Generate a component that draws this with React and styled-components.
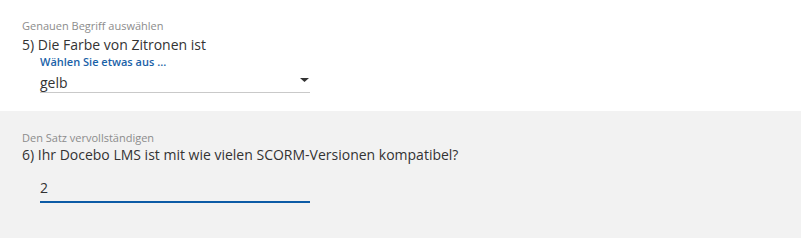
import React from 'react';
import styled, { createGlobalStyle } from 'styled-components';

const GlobalStyle = createGlobalStyle`
  body {
    margin: 0;
    background: #fff;
    font-family: 'Open Sans', 'Noto Sans', sans-serif;
    color: #333;
  }
`;

const Page = styled.div`
  width: 801px;
  height: 246px;
  background: #fff;
`;

const QuestionBlock = styled.section`
  background: ${(p) => (p.shaded ? '#f2f2f2' : '#fff')};
  padding: ${(p) => (p.shaded ? '19px 22px 0 22px' : '18px 22px 0 22px')};
  height: ${(p) => (p.shaded ? '127px' : '111px')};
  box-sizing: border-box;
`;

const TypeLabel = styled.div`
  font-size: 11px;
  line-height: 15px;
  color: #8c8c8c;
`;

const QuestionText = styled.div`
  font-size: 14px;
  line-height: 19px;
  margin-top: ${(p) => p.gap || 0}px;
  color: #333;
`;

const Answer = styled.div`
  width: 270px;
  margin-left: 18px;
  margin-top: ${(p) => p.gap || 0}px;
`;

const Hint = styled.div`
  font-size: 11px;
  line-height: 15px;
  font-weight: 600;
  color: #1a62a8;
`;

const SelectBox = styled.div`
  display: flex;
  align-items: flex-start;
  justify-content: space-between;
  padding-top: 4px;
  border-bottom: 1px solid #c9c9c9;
  font-size: 14px;
  line-height: 19px;
  color: #333;
`;

const Caret = styled.svg`
  width: 9px;
  height: 4px;
  margin: 5px 1px 0 0;
`;

const TextInput = styled.div`
  padding-bottom: 4px;
  border-bottom: 2px solid #0d5ba6;
  font-size: 14px;
  line-height: 19px;
  color: #333;
`;

export default function App() {
  return (
    <Page>
      <GlobalStyle />
      <QuestionBlock>
        <TypeLabel>Genauen Begriff auswählen</TypeLabel>
        <QuestionText gap={2}>5) Die Farbe von Zitronen ist</QuestionText>
        <Answer>
          <Hint>Wählen Sie etwas aus ...</Hint>
          <SelectBox>
            <span>gelb</span>
            <Caret viewBox="0 0 9 4">
              <path d="M0 0h9L4.5 4z" fill="#333" />
            </Caret>
          </SelectBox>
        </Answer>
      </QuestionBlock>
      <QuestionBlock shaded>
        <TypeLabel>Den Satz vervollständigen</TypeLabel>
        <QuestionText>6) Ihr Docebo LMS ist mit wie vielen SCORM-Versionen kompatibel?</QuestionText>
        <Answer gap={14}>
          <TextInput>2</TextInput>
        </Answer>
      </QuestionBlock>
    </Page>
  );
}
